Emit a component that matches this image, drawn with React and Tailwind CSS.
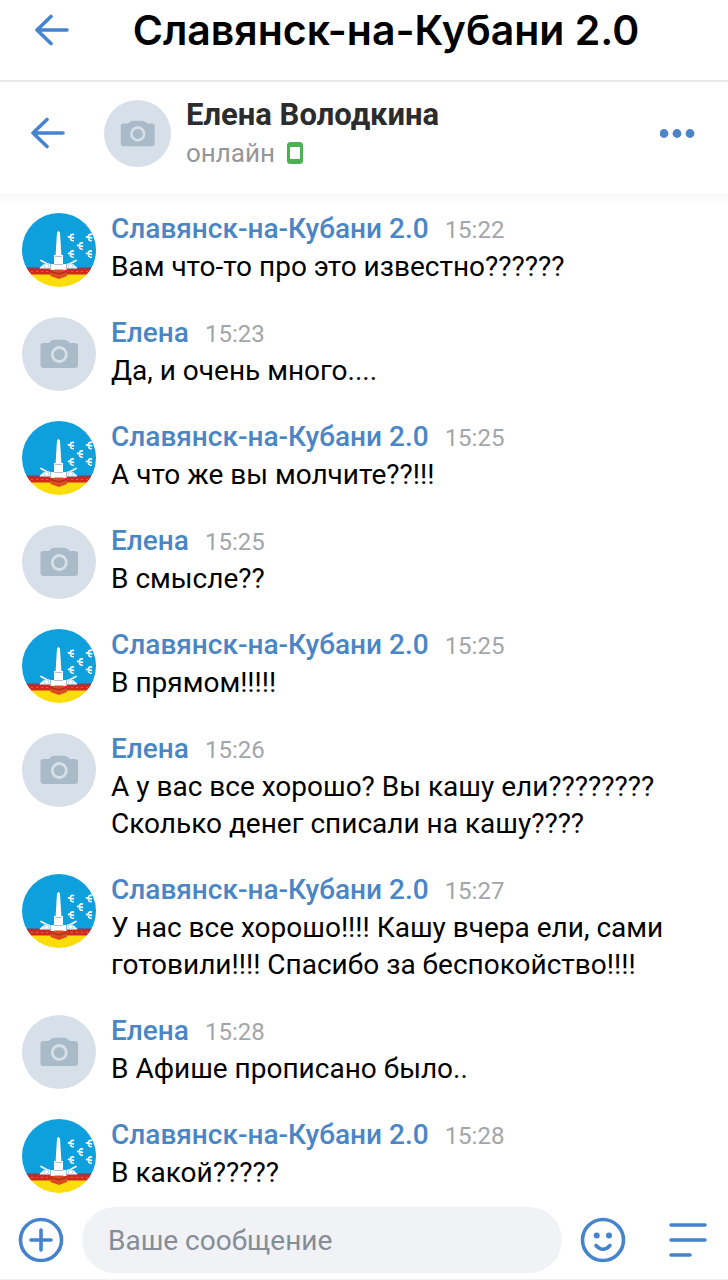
import React, { useState } from "react";

const GROUP = "Славянск-на-Кубани 2.0";

const messages = [
  { author: GROUP, time: "15:22", text: "Вам что-то про это известно??????" },
  { author: "Елена", time: "15:23", text: "Да, и очень много...." },
  { author: GROUP, time: "15:25", text: "А что же вы молчите??!!!" },
  { author: "Елена", time: "15:25", text: "В смысле??" },
  { author: GROUP, time: "15:25", text: "В прямом!!!!!" },
  {
    author: "Елена",
    time: "15:26",
    text: "А у вас все хорошо? Вы кашу ели???????? Сколько денег списали на кашу????",
  },
  {
    author: GROUP,
    time: "15:27",
    text: "У нас все хорошо!!!! Кашу вчера ели, сами готовили!!!! Спасибо за беспокойство!!!!",
  },
  { author: "Елена", time: "15:28", text: "В Афише прописано было.." },
  { author: GROUP, time: "15:28", text: "В какой?????" },
];

const BackArrow = () => (
  <svg
    className="w-9 h-8"
    viewBox="0 0 36 32"
    fill="none"
    stroke="currentColor"
    strokeWidth="3.6"
    strokeLinecap="round"
    strokeLinejoin="round"
  >
    <path d="M17 2.5 3 16l14 13.5M3 16h30" />
  </svg>
);

const CameraAvatar = ({ className }) => (
  <svg className={className} viewBox="0 0 74 74">
    <circle cx="37" cy="37" r="37" fill="#d7e0e9" />
    <path
      d="M21 26h5.5l3-2.300q1.200-.9 2.700-.9h10q1.500 0 2.700.9l3 2.300H53q3 0 3 3v19q0 3-3 3H21.500q-3 0-3-3V29q0-3 2.500-3z"
      fill="#a9bac9"
    />
    <circle cx="37.3" cy="37.5" r="7" fill="none" stroke="#d7e0e9" strokeWidth="2.8" />
  </svg>
);

const Bird = ({ x, y }) => (
  <g
    transform={`translate(${x} ${y})`}
    fill="none"
    stroke="#fff"
    strokeWidth="1.6"
    strokeLinecap="round"
    strokeLinejoin="round"
  >
    <path d="M-2.500-.6 2.500.4M2.500-3Q-.8-3.600-.6-.2M2.300 3.200Q-.6 3.200-.6.2" />
  </g>
);

// City flag: obelisk, two cannons, birds on blue
const FlagAvatar = ({ className }) => (
  <svg className={className} viewBox="0 0 74 74">
    <defs>
      <clipPath id="flag-circle">
        <circle cx="37" cy="37" r="37" />
      </clipPath>
    </defs>
    <g clipPath="url(#flag-circle)">
      <path d="M0 0h74v56H0z" fill="#0e9fdd" />
      <path d="M0 55h74v7H0z" fill="#d02a20" />
      <path d="M0 54.500h74v1.500H0z" fill="#8d3a4a" />
      <path d="M4 58.500h66" stroke="#e5602c" strokeWidth="1" strokeDasharray="2 3" />
      <path d="M0 61.500h74V74H0z" fill="#fbdd0c" />
      <path d="M35 19.500 36.500 17.800 38 19.500 39.400 42H41v9h3.500v6h-16v-6H32v-9h1.600z" fill="#fff" />
      <path d="M33 43.500h7M32 51.500h9" stroke="#a9b8c4" strokeWidth=".9" />
      <path
        d="m19 47.500 7.500 4M54 47.500l-7.500 4"
        stroke="#f2f7fa"
        strokeWidth="1.800"
        strokeLinecap="round"
      />
      <path d="M17.500 54.800 22 51l6-.5v5H18zM55.500 54.800 51 51l-6-.5v5h10z" fill="#f2f7fa" />
      <circle cx="24.500" cy="53" r="2.200" fill="#fff" stroke="#9cc4da" strokeWidth=".6" />
      <circle cx="48.500" cy="53" r="2.200" fill="#fff" stroke="#9cc4da" strokeWidth=".6" />
      <path d="M28.500 58 33 56.500h7.500L45 58v5l-8 3-8.500-3z" fill="#dc4a20" />
      <path d="m28.500 58.500 8.300 2.300 8.200-2.300" fill="none" stroke="#8f2414" strokeWidth=".9" />
      <Bird x={49} y={24.5} />
      <Bird x={67} y={24.5} />
      <Bird x={58} y={33} />
      <Bird x={49} y={41} />
      <Bird x={67} y={41} />
    </g>
  </svg>
);

const Message = ({ author, time, text }) => (
  <li className="flex items-start gap-[15px]">
    {author === GROUP ? (
      <FlagAvatar className="w-[74px] h-[74px] mt-[3px] -mb-[3px] shrink-0" />
    ) : (
      <CameraAvatar className="w-[74px] h-[74px] mt-[3px] -mb-[3px] shrink-0" />
    )}
    <div className="min-w-0 flex-1">
      <div className="flex items-baseline gap-4 h-[38px]">
        <a href="#profile" className="text-[28px] leading-[37px] font-medium text-[#4a86c5]">
          {author}
        </a>
        <time className="text-[24px] leading-[37px] text-[#a2a6aa]">{time}</time>
      </div>
      <p className="text-[28px] leading-[37px] text-black">{text}</p>
    </div>
  </li>
);

const App = () => {
  const [draft, setDraft] = useState("");

  return (
    <div className="w-full bg-white font-['Roboto','Noto_Sans',sans-serif]">
      <header className="flex items-center h-[82px] pb-5 px-[34px] border-b-2 border-[#e8e9ea]">
        <button aria-label="Назад" className="text-[#4584d0]">
          <BackArrow />
        </button>
        <h1 className="flex-1 pl-2 text-center text-[41px] leading-[60px] font-semibold text-black font-['Inter','Roboto',sans-serif] whitespace-nowrap">
          {GROUP}
        </h1>
      </header>

      <div className="flex items-center h-[113px] pb-2.5 pl-[30px] pr-8 border-b border-[#f6f7f8]">
        <button aria-label="Назад" className="text-[#4584d0]">
          <BackArrow />
        </button>
        <CameraAvatar className="w-[67px] h-[67px] ml-[38px] shrink-0" />
        <div className="flex-1 ml-[15px] pt-0.5">
          <h2 className="text-[31px] leading-[38px] font-bold text-[#2b2c2e]">Елена Володкина</h2>
          <p className="flex items-center gap-3 text-[26px] leading-[38px] text-[#949699]">
            онлайн
            <svg className="w-4 h-[22px]" viewBox="0 0 16 22">
              <rect width="16" height="22" rx="3.5" fill="#4bb152" />
              <rect x="3" y="5" width="10" height="12" rx="1" fill="#fff" />
            </svg>
          </p>
        </div>
        <button aria-label="Ещё" className="text-[#4a84c9]">
          <svg className="w-9 h-9" viewBox="0 0 36 36" fill="currentColor">
            <circle cx="4" cy="18.5" r="4.4" />
            <circle cx="17" cy="18.5" r="4.4" />
            <circle cx="30" cy="18.5" r="4.4" />
          </svg>
        </button>
      </div>
      <div className="h-1.5 bg-[#fafbfb]" />

      <ul className="flex flex-col gap-[29px] pt-[9px] pl-[22px] pr-10">
        {messages.map((message, index) => (
          <Message key={index} {...message} />
        ))}
      </ul>

      <form
        className="flex items-center pt-4 pb-1.5 pl-[18px] pr-5 border-b border-[#f0f1f2] text-[#4584cc]"
        onSubmit={(e) => e.preventDefault()}
      >
        <button type="button" aria-label="Прикрепить">
          <svg
            className="w-[46px] h-[46px]"
            viewBox="0 0 46 46"
            fill="none"
            stroke="currentColor"
            strokeWidth="3.6"
            strokeLinecap="round"
          >
            <circle cx="23" cy="23" r="20.5" />
            <path d="M23 13v20M13 23h20" />
          </svg>
        </button>
        <input
          type="text"
          aria-label="Ваше сообщение"
          placeholder="Ваше сообщение"
          value={draft}
          onChange={(e) => setDraft(e.target.value)}
          className="flex-1 min-w-0 h-[66px] mx-[18px] px-[26px] rounded-full bg-[#f0f2f5] text-[28px] text-black placeholder:text-[#858d96] outline-none"
        />
        <button type="button" aria-label="Смайлы">
          <svg
            className="w-[46px] h-[46px]"
            viewBox="0 0 46 46"
            fill="none"
            stroke="currentColor"
            strokeWidth="3.6"
            strokeLinecap="round"
          >
            <circle cx="23" cy="23" r="20.5" />
            <path d="M16 28.500q7 7.500 14 0" />
            <circle cx="16.7" cy="18.5" r="3" fill="currentColor" stroke="none" />
            <circle cx="29" cy="18.5" r="3" fill="currentColor" stroke="none" />
          </svg>
        </button>
        <button type="button" aria-label="Меню" className="ml-[42px]">
          <svg
            className="w-10 h-10"
            viewBox="0 0 40 40"
            stroke="currentColor"
            strokeWidth="3.6"
            strokeLinecap="round"
          >
            <path d="M3 5h34M3 20h34M3 35h19" />
          </svg>
        </button>
      </form>
    </div>
  );
};

export default App;
